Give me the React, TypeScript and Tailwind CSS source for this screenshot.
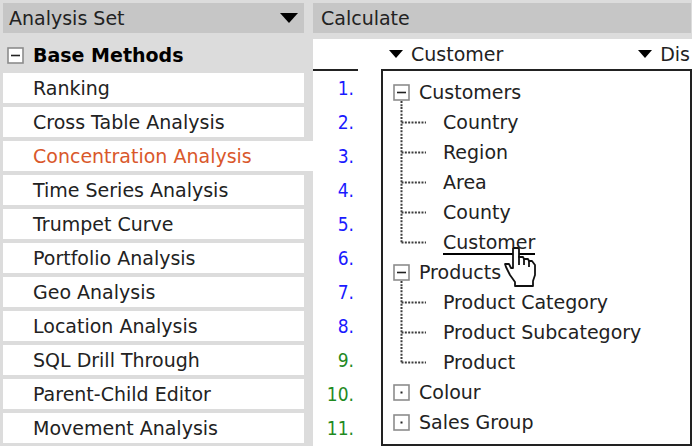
import { useState } from "react";
import clsx from "clsx";

type TreeGroup = {
  name: string;
  children: string[];
};

const methods = [
  "Ranking",
  "Cross Table Analysis",
  "Concentration Analysis",
  "Time Series Analysis",
  "Trumpet Curve",
  "Portfolio Analysis",
  "Geo Analysis",
  "Location Analysis",
  "SQL Drill Through",
  "Parent-Child Editor",
  "Movement Analysis",
];

const groups: TreeGroup[] = [
  { name: "Customers", children: ["Country", "Region", "Area", "County", "Customer"] },
  { name: "Products", children: ["Product Category", "Product Subcategory", "Product"] },
  { name: "Colour", children: [] },
  { name: "Sales Group", children: [] },
];

function Caret({ className }: { className: string }) {
  return (
    <svg viewBox="0 0 18 10" className={className} aria-hidden="true">
      <path d="M0 0H18L9 10Z" fill="#000" />
    </svg>
  );
}

function ToggleBox({ open }: { open: boolean }) {
  return (
    <svg width="17" height="17" viewBox="0 0 17 17" className="shrink-0" aria-hidden="true">
      <rect x="1" y="1" width="15" height="15" fill="#fff" stroke="#8c8c8c" strokeWidth="1.6" />
      {open ? (
        <path d="M4 8.5H13" stroke="#222" strokeWidth="1.6" />
      ) : (
        <path d="M7.5 8.5H9.5" stroke="#222" strokeWidth="2" />
      )}
    </svg>
  );
}

function Branch({ last }: { last: boolean }) {
  return (
    <svg width="42" height="30" viewBox="0 0 42 30" className="shrink-0" aria-hidden="true">
      <g stroke="#3c3c3c" strokeWidth="2" strokeDasharray="2 1.333">
        <path d={last ? "M8.5 0V16" : "M8.5 0V30"} />
        <path d="M8.5 15.5H33" />
      </g>
    </svg>
  );
}

function HandCursor() {
  return (
    <svg
      width="33"
      height="42"
      viewBox="0 0 33 42"
      className="pointer-events-none absolute top-5 left-[61px] z-10"
      aria-hidden="true"
    >
      <path
        d="M9 2L10 1H14L15 2V10H19L20 12H24L25 14H28L31 18V28L29 34V39H11V35L6 28L2 20L1 17H5L7 21H9Z"
        fill="#fff"
        stroke="#111"
        strokeWidth="1.8"
        strokeLinejoin="round"
      />
      <path d="M15 9V18M20 11V18M25 13V20" fill="none" stroke="#111" strokeWidth="1.8" />
    </svg>
  );
}

function DimensionTree() {
  const [selected, setSelected] = useState("Customer");
  const [closed, setClosed] = useState<string[]>([]);

  const toggle = (name: string) => {
    setClosed(closed.includes(name) ? closed.filter((n) => n !== name) : [...closed, name]);
  };

  return (
    <ul className="flex-1 border-2 border-[#222] bg-white py-1.5 pl-2.5">
      {groups.map((group) => {
        const open = group.children.length > 0 && !closed.includes(group.name);
        return (
          <li key={group.name}>
            <button
              onClick={() => toggle(group.name)}
              className="relative flex h-[30px] items-center gap-[9px]"
            >
              <ToggleBox open={open} />
              {open && (
                <svg width="17" height="6" className="absolute bottom-0 left-0" aria-hidden="true">
                  <path d="M8.5 0V6" stroke="#3c3c3c" strokeWidth="2" strokeDasharray="2 1.333" />
                </svg>
              )}
              {group.name}
            </button>
            {open && (
              <ul>
                {group.children.map((child, i) => (
                  <li key={child} className="flex h-[30px] items-center">
                    <Branch last={i === group.children.length - 1} />
                    <button
                      onClick={() => setSelected(child)}
                      className="relative ml-2 h-[30px]"
                    >
                      <span
                        className={clsx(
                          selected === child && "border-b-2 border-black"
                        )}
                      >
                        {child}
                      </span>
                      {selected === child && <HandCursor />}
                    </button>
                  </li>
                ))}
              </ul>
            )}
          </li>
        );
      })}
    </ul>
  );
}

export default function App() {
  const [active, setActive] = useState("Concentration Analysis");

  return (
    <div className="grid grid-cols-[301px_minmax(0,1fr)] gap-x-[9px] overflow-hidden bg-[#dcdcdc] pt-[3px] pr-px pl-[3px] font-['DejaVu_Sans',sans-serif] text-[19px] leading-6 whitespace-nowrap text-[#222]">
      <aside>
        <button className="flex h-[30px] w-full items-center justify-between bg-[#c6c6c6] pr-1.5 pl-1.5">
          Analysis Set
          <Caret className="h-2.5 w-[18px]" />
        </button>
        <button className="flex h-10 w-full items-center gap-[9px] pt-1 pl-1 font-bold text-black">
          <ToggleBox open />
          Base Methods
        </button>
        <ul className="flex flex-col gap-1 pb-1">
          {methods.map((method) => (
            <li key={method} className={clsx("h-[30px] bg-white", active === method && "-mr-[9px]")}>
              <button
                onClick={() => setActive(method)}
                className={clsx(
                  "h-full w-full pl-[30px] text-left",
                  active === method && "text-[#d9582b]"
                )}
              >
                {method}
              </button>
            </li>
          ))}
        </ul>
      </aside>

      <main className="flex flex-col">
        <h2 className="flex h-[30px] items-center bg-[#c6c6c6] pl-2">Calculate</h2>
        <section className="mt-1.5 -mr-px flex flex-1 bg-white">
          <div className="w-[45px] shrink-0">
            <div className="h-8 border-b-2 border-[#222]" />
            <ol className="flex flex-col gap-1 pt-0.5 pr-1 font-['DejaVu_Sans_Condensed','DejaVu_Sans',sans-serif]">
              {methods.map((method, i) => (
                <li
                  key={method}
                  className={clsx(
                    "flex h-[30px] items-center justify-end",
                    i < 8 ? "text-[#1a1aff]" : "text-[#1f8a1f]"
                  )}
                >
                  {i + 1}.
                </li>
              ))}
            </ol>
          </div>
          <div className="ml-[23px] flex min-w-0 flex-1 flex-col pb-px">
            <div className="flex h-[30px] items-center justify-between overflow-hidden pr-0.5 pl-2">
              <button className="flex items-center gap-2">
                <Caret className="h-2 w-3.5" />
                Customer
              </button>
              <button className="flex items-center gap-2">
                <Caret className="h-2 w-3.5" />
                Dis
              </button>
            </div>
            <DimensionTree />
          </div>
        </section>
      </main>
    </div>
  );
}
